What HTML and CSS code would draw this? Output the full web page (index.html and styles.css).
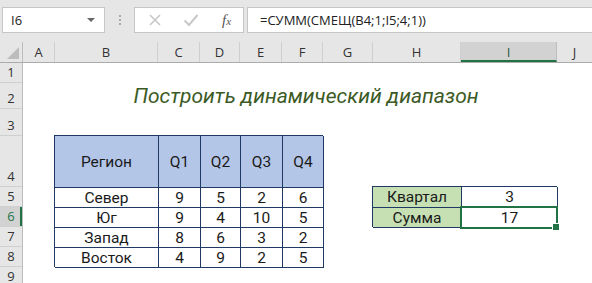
FILE: index.html
```html
<!DOCTYPE html>
<html lang="ru">
<head>
    <meta charset="UTF-8">
    <title>Построить динамический диапазон</title>
    <link rel="stylesheet" href="styles.css">
</head>
<body>
    <div class="formula-bar">
        <div class="name-box">
            <span>I6</span>
            <span class="caret"></span>
        </div>
        <div class="grip"><i></i><i></i><i></i></div>
        <div class="fx-buttons">
            <svg class="btn-icon" width="14" height="14" viewBox="0 0 14 14">
                <path d="M2 2 L12 12 M12 2 L2 12" stroke="#c8c8c8" stroke-width="1.6" fill="none"/>
            </svg>
            <svg class="btn-icon" width="16" height="14" viewBox="0 0 16 14">
                <path d="M1.5 7.5 L6 12 L14.5 2" stroke="#c8c8c8" stroke-width="2" fill="none"/>
            </svg>
            <span class="fx">f<sub>x</sub></span>
        </div>
        <div class="formula-input">=СУММ(СМЕЩ(B4;1;I5;4;1))</div>
    </div>

    <div class="sheet">
        <div class="col-headers">
            <div class="corner"><span class="corner-tri"></span></div>
            <div class="col-h w-a">A</div>
            <div class="col-h w-b">B</div>
            <div class="col-h w-c">C</div>
            <div class="col-h w-d">D</div>
            <div class="col-h w-e">E</div>
            <div class="col-h w-f">F</div>
            <div class="col-h w-g">G</div>
            <div class="col-h w-h">H</div>
            <div class="col-h w-i active">I</div>
            <div class="col-h w-j">J</div>
        </div>

        <div class="body">
            <div class="row-headers">
                <div class="row-h h-20">1</div>
                <div class="row-h h-26">2</div>
                <div class="row-h h-27">3</div>
                <div class="row-h h-51">4</div>
                <div class="row-h h-20">5</div>
                <div class="row-h h-20 active">6</div>
                <div class="row-h h-20">7</div>
                <div class="row-h h-20">8</div>
                <div class="row-h h-20">9</div>
            </div>

            <div class="cells">
                <div class="title">Построить динамический диапазон</div>

                <div class="region-table">
                    <div class="th">Регион</div>
                    <div class="th">Q1</div>
                    <div class="th">Q2</div>
                    <div class="th">Q3</div>
                    <div class="th">Q4</div>

                    <div class="td">Север</div><div class="td">9</div><div class="td">5</div><div class="td">2</div><div class="td">6</div>
                    <div class="td">Юг</div><div class="td">9</div><div class="td">4</div><div class="td">10</div><div class="td">5</div>
                    <div class="td">Запад</div><div class="td">8</div><div class="td">6</div><div class="td">3</div><div class="td">2</div>
                    <div class="td">Восток</div><div class="td">4</div><div class="td">9</div><div class="td">2</div><div class="td">5</div>
                </div>

                <div class="sum-table">
                    <div class="label">Квартал</div>
                    <div class="td">3</div>
                    <div class="label">Сумма</div>
                    <div class="td selected">17</div>
                </div>
            </div>
        </div>
    </div>
</body>
</html>
```

FILE: styles.css
```css
* {
    box-sizing: border-box;
}
body {
    margin: 0;
    width: 592px;
    height: 283px;
    overflow: hidden;
    background: #fff;
    font-family: Roboto, "Liberation Sans", sans-serif;
}

/* formula bar */
.formula-bar {
    display: flex;
    align-items: flex-start;
    height: 42px;
    padding-top: 7px;
    padding-left: 2px;
    background: #e6e6e6;
}
.name-box {
    width: 103px;
    height: 26px;
    background: #fff;
    border: 1px solid #c6c6c6;
    display: flex;
    align-items: center;
    justify-content: space-between;
    padding: 0 9px 0 8px;
    font-family: "Open Sans", "Noto Sans", sans-serif;
    font-size: 13px;
    color: #222;
}
.caret {
    width: 0;
    height: 0;
    border-left: 4px solid transparent;
    border-right: 4px solid transparent;
    border-top: 4px solid #666;
}
.grip {
    width: 29px;
    height: 26px;
    display: flex;
    flex-direction: column;
    align-items: center;
    justify-content: center;
    gap: 2px;
}
.grip i {
    width: 2px;
    height: 2px;
    background: #aaa;
}
.fx-buttons {
    width: 110px;
    height: 26px;
    background: #fff;
    border: 1px solid #c6c6c6;
    display: flex;
    align-items: center;
    padding-left: 13px;
    gap: 21px;
}
.fx {
    font-family: "Liberation Serif", serif;
    font-style: italic;
    font-size: 15px;
    color: #555;
    margin-left: 2px;
}
.fx sub {
    font-size: 11px;
    vertical-align: 0;
}
.formula-input {
    flex: 1;
    height: 26px;
    margin-left: 3px;
    background: #fff;
    border: 1px solid #c6c6c6;
    border-right: none;
    padding-left: 12px;
    line-height: 24px;
    font-family: "Open Sans", "Noto Sans", sans-serif;
    font-size: 13px;
    color: #222;
}

/* sheet headers */
.col-headers {
    display: flex;
    height: 21px;
    background: #e6e6e6;
    border-bottom: 1px solid #ababab;
}
.corner {
    width: 23px;
    border-right: 1px solid #bdbdbd;
    position: relative;
}
.corner-tri {
    position: absolute;
    right: 3px;
    bottom: 3px;
    width: 0;
    height: 0;
    border-left: 12px solid transparent;
    border-bottom: 12px solid #bcbcbc;
}
.col-h {
    border-right: 1px solid #cfcfcf;
    text-align: center;
    font-family: "Open Sans", "Noto Sans", sans-serif;
    font-size: 13px;
    line-height: 20px;
    color: #333;
}
.col-h.active {
    background: #d2d2d2;
    border-right-color: #bdbdbd;
    border-bottom: 2px solid #217346;
    color: #2a5a3c;
}
.w-a { width: 32px; }
.w-b { width: 103px; }
.w-c { width: 42px; }
.w-d { width: 40px; }
.w-e { width: 42px; }
.w-f { width: 41px; }
.w-g { width: 50px; }
.w-h { width: 88px; }
.w-i { width: 96px; }
.w-j { flex: 1; border-right: none; }

.body {
    display: flex;
}
.row-headers {
    width: 23px;
    display: flex;
    flex-direction: column;
    background: #e6e6e6;
    border-right: 1px solid #bdbdbd;
}
.row-h {
    border-bottom: 1px solid #cfcfcf;
    display: flex;
    align-items: flex-end;
    justify-content: center;
    padding-bottom: 1px;
    font-family: "Open Sans", "Noto Sans", sans-serif;
    font-size: 13px;
    line-height: 18px;
    color: #333;
}
.row-h.active {
    background: #d2d2d2;
    color: #217346;
    box-shadow: inset -2px 0 0 #217346;
}
.h-20 { height: 20px; }
.h-26 { height: 26px; }
.h-27 { height: 27px; }
.h-51 { height: 51px; }

/* cell area */
.cells {
    flex: 1;
    display: grid;
    grid-template-columns: 32px 103px 42px 40px 42px 41px 50px 88px 96px 1fr;
    grid-template-rows: 20px 26px 27px 51px 20px 20px 20px 20px 20px;
}
.title {
    grid-column: 2 / 10;
    grid-row: 2;
    text-align: center;
    font-style: italic;
    font-size: 21px;
    line-height: 26px;
    color: #3b5a26;
}

.region-table {
    grid-column: 2 / 7;
    grid-row: 4 / 9;
    margin: -1px 0 0 -1px;
    display: grid;
    grid-template-columns: 104px 42px 40px 42px 41px;
    grid-template-rows: 52px 20px 20px 20px 20px;
    border-left: 1px solid #203864;
    border-top: 1px solid #203864;
}
.th, .td, .label {
    border-right: 1px solid #203864;
    border-bottom: 1px solid #203864;
    display: flex;
    align-items: center;
    justify-content: center;
    font-size: 15.5px;
    color: #1a1a1a;
}
.th {
    background: #b4c6e7;
}

.sum-table {
    grid-column: 8 / 10;
    grid-row: 5 / 7;
    margin: -1px 0 0 -1px;
    display: grid;
    grid-template-columns: 89px 96px;
    grid-template-rows: 21px 20px;
    border-left: 1px solid #203864;
    border-top: 1px solid #203864;
}
.label {
    background: #c6e0b4;
}
.selected {
    position: relative;
}
/* active cell frame and fill handle */
.selected::before {
    content: "";
    position: absolute;
    top: -2px;
    left: -2px;
    right: -1px;
    bottom: -2px;
    border: 2px solid #217346;
}
.selected::after {
    content: "";
    position: absolute;
    right: -3px;
    bottom: -4px;
    width: 6px;
    height: 6px;
    background: #217346;
    border: 1px solid #fff;
}
```
